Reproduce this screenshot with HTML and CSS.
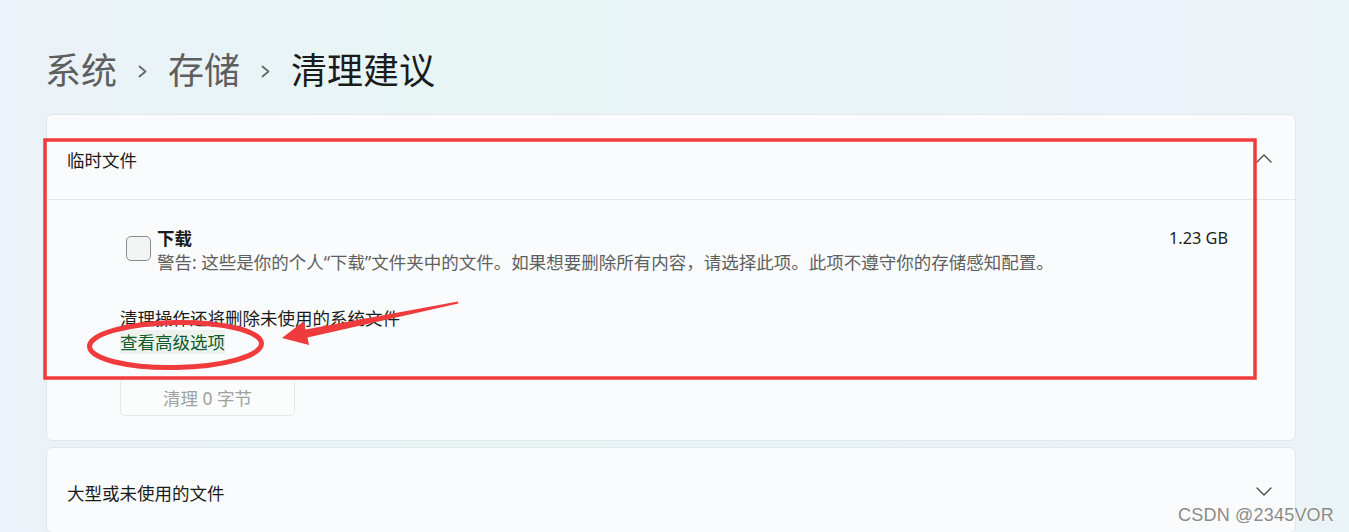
FILE: index.html
```html
<!DOCTYPE html>
<html lang="zh-CN">
<head>
    <meta charset="UTF-8">
    <meta name="viewport" content="width=device-width, initial-scale=1.0">
    <title>清理建议 - 存储</title>
    <link rel="stylesheet" href="styles.css">
</head>
<body>
    <div class="page">
        <nav class="breadcrumb">
            <span class="crumb">系统</span>
            <svg class="crumb-sep" width="9" height="13" viewBox="0 0 9 13"><polyline points="1.5,1.5 7.5,6.5 1.5,11.5"></polyline></svg>
            <span class="crumb">存储</span>
            <svg class="crumb-sep" width="9" height="13" viewBox="0 0 9 13"><polyline points="1.5,1.5 7.5,6.5 1.5,11.5"></polyline></svg>
            <span class="crumb current">清理建议</span>
        </nav>

        <section class="expander">
            <div class="expander-header">
                <span>临时文件</span>
                <svg class="chevron" width="16" height="9" viewBox="0 0 16 9"><polyline points="1,8 8,1 15,8"></polyline></svg>
            </div>
            <div class="expander-body">
                <div class="check-row">
                    <span class="checkbox"></span>
                    <div class="check-text">
                        <div class="check-title">下载</div>
                        <div class="check-desc">警告: 这些是你的个人“下载”文件夹中的文件。如果想要删除所有内容，请选择此项。此项不遵守你的存储感知配置。</div>
                    </div>
                    <span class="check-size">1.23 GB</span>
                </div>
                <p class="note">清理操作还将删除未使用的系统文件</p>
                <a class="link" href="#">查看高级选项</a>
                <button class="clean-button" disabled>清理 0 字节</button>
            </div>
        </section>

        <section class="expander">
            <div class="expander-header">
                <span>大型或未使用的文件</span>
                <svg class="chevron" width="16" height="9" viewBox="0 0 16 9"><polyline points="1,1 8,8 15,1"></polyline></svg>
            </div>
        </section>
    </div>

    <!-- red markup drawn over the screenshot -->
    <svg class="annotations" width="1349" height="532" viewBox="0 0 1349 532">
        <rect x="45" y="140" width="1210" height="238" fill="none" stroke="#ef3b3b" stroke-width="3.5"></rect>
        <ellipse cx="175.5" cy="345" rx="86" ry="22.5" fill="none" stroke="#ef3b3b" stroke-width="5" transform="rotate(-1 175 345)"></ellipse>
        <polygon points="282,338 304,321 305.5,329.5 458,301.5 458.3,303.5 307.5,337.5 309,345" fill="#ef3b3b"></polygon>
    </svg>

    <div class="watermark">CSDN @2345VOR</div>
</body>
</html>
```

FILE: styles.css
```css
:root {
    --bg-color: #eaf3f7;
    --card-color: #f9fbfc;
    --card-border: #e2e8ea;
    --text-color: #1b1b1b;
    --muted-color: #5f5f5f;
    --link-color: #0f5b2b;
    --mark-color: #ef3b3b;
}

html, body {
    margin: 0;
    padding: 0;
    height: 100%;
}

body {
    font-family: "Noto Sans", "Noto Sans CJK SC", sans-serif;
    color: var(--text-color);
    background: linear-gradient(90deg, #ebf2f9 0%, #e7f5f4 35%, #e9f4f6 60%, #ebf2fa 85%, #eaf3f5 100%);
    position: relative;
    overflow: hidden;
}

.page {
    padding: 46px 53px 0 45px;
}

.breadcrumb {
    display: flex;
    align-items: center;
    gap: 21px;
    height: 49px;
    font-size: 36px;
    line-height: 49px;
    color: #5e5e5e;
}

.crumb.current {
    color: var(--text-color);
}

.crumb-sep {
    fill: none;
    stroke: #666;
    stroke-width: 1.8;
    stroke-linecap: round;
    stroke-linejoin: round;
    margin-top: 2px;
}

.expander {
    background-color: var(--card-color);
    border: 1px solid var(--card-border);
    border-radius: 6px;
    margin: 19px 0 0 1px;
}

.expander + .expander {
    margin-top: 6px;
}

.expander-header {
    display: flex;
    align-items: center;
    justify-content: space-between;
    height: 84px;
    padding: 0 23px 0 20px;
    font-size: 17.5px;
}

.expander-header span {
    margin-top: 4px;
}

.chevron {
    fill: none;
    stroke: #4a4a4a;
    stroke-width: 1.3;
    stroke-linecap: round;
    stroke-linejoin: round;
    margin-top: 2px;
}

.expander-body {
    border-top: 1px solid var(--card-border);
    padding: 26px 67px 24px 73px;
    display: flex;
    flex-direction: column;
    align-items: flex-start;
    font-size: 17.5px;
    line-height: 24px;
}

.check-row {
    display: flex;
    align-items: flex-start;
    align-self: stretch;
}

.checkbox {
    width: 23px;
    height: 23px;
    border: 1px solid #8c8c8c;
    border-radius: 5px;
    background-color: #f3f4f4;
    margin: 10px 6px 0 6px;
    flex-shrink: 0;
}

.check-text {
    flex: 1;
}

.check-title {
    font-weight: 700;
}

.check-desc {
    color: var(--muted-color);
}

.check-size {
    white-space: nowrap;
    font-size: 16.3px;
}

.note {
    margin: 32px 0 0 0;
}

.link {
    color: var(--link-color);
    text-decoration: none;
    background-color: #eef2ef;
}

.clean-button {
    margin-top: 24px;
    width: 175px;
    height: 38px;
    font-family: inherit;
    font-size: 17.5px;
    color: #a0a0a0;
    background-color: #fbfcfc;
    border: 1px solid #e5e8e9;
    border-radius: 5px;
}

.annotations {
    position: absolute;
    left: 0;
    top: 0;
    pointer-events: none;
}

.watermark {
    position: absolute;
    right: 15px;
    bottom: 6px;
    font-family: "Liberation Sans", sans-serif;
    font-size: 18px;
    color: #8a8a8a;
    text-shadow: 0 0 2px #ffffff, 0 0 1px #ffffff;
    letter-spacing: 0.2px;
}
```
